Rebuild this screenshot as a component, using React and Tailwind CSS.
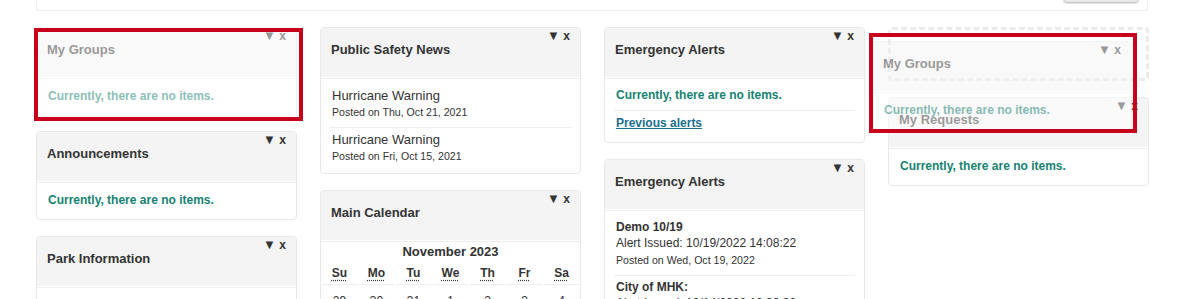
import React from "react";

const TEAL = "text-[#168272]";

function Controls() {
  return (
    <div className="pt-[1px] text-[12px] leading-[14px] font-bold text-[#333] whitespace-nowrap">
      <span className="text-[13px]">▼</span> x
    </div>
  );
}

function Widget({ title, children, className = "", bodyClass = "px-[9px] pt-[5px] pb-[4px]" }) {
  return (
    <div className={`rounded-[4px] border border-[#e9e9e9] bg-white overflow-hidden ${className}`}>
      <div className="flex h-[50px] items-start justify-between border-b border-white bg-[#f4f4f4] pl-[10px] pr-[10px]">
        <div className="pt-[12px] text-[13px] leading-[20px] font-bold text-[#333]">{title}</div>
        <Controls />
      </div>
      <div className={`border-t border-[#eee] ${bodyClass}`}>{children}</div>
    </div>
  );
}

function Item({ children, last }) {
  return (
    <div className={`px-[2px] pt-[3px] pb-[6px] leading-[16px] ${last ? "" : "border-b border-[#eee]"}`}>{children}</div>
  );
}

function Empty() {
  return (
    <Item last>
      <div className={`text-[12px] leading-[18px] font-bold ${TEAL}`}>Currently, there are no items.</div>
    </Item>
  );
}

function EmptyWidget({ title, className }) {
  return (
    <Widget title={title} className={className}>
      <Empty />
    </Widget>
  );
}

function NewsItem({ title, date, last }) {
  return (
    <Item last={last}>
      <div className="pt-[1px] text-[13px] leading-[16px] text-[#333]">{title}</div>
      <div className="text-[10.6px] leading-[17px] text-[#333]">Posted on {date}</div>
    </Item>
  );
}

function AlertItem({ title, issued, date, last }) {
  return (
    <Item last={last}>
      <div className="text-[12px] leading-[16px] font-bold text-[#333]">{title}</div>
      <div className="text-[12px] leading-[16px] text-[#333]">Alert Issued: {issued}</div>
      <div className="mt-[1px] text-[10.6px] leading-[17px] text-[#333]">Posted on {date}</div>
    </Item>
  );
}

const DAYS = ["Su", "Mo", "Tu", "We", "Th", "Fr", "Sa"];
const WEEKS = [
  ["29", "30", "31", "1", "2", "3", "4"],
  ["5", "6", "7", "8", "9", "10", "11"],
];

function Calendar() {
  return (
    <Widget title="Main Calendar" bodyClass="pt-[1px] pb-[4px]">
      <div className="text-center text-[13px] leading-[18px] font-bold text-[#333]">November 2023</div>
      <div className="mt-[4px] grid grid-cols-7">
        {DAYS.map((d) => (
          <div key={d} className="mx-[1px] border-b border-[#eee] pb-[3px] text-center text-[12px] leading-[16px] font-bold text-[#333]">
            <span className="underline decoration-dotted underline-offset-[3px]">{d}</span>
          </div>
        ))}
        {WEEKS.flat().map((d, i) => (
          <div key={i} className="mx-[1px] pt-[8px] pb-[6px] text-center text-[12px] leading-[16px] text-[#333]">
            {d}
          </div>
        ))}
      </div>
    </Widget>
  );
}

export default function App() {
  return (
    <div className="relative h-[299px] overflow-hidden bg-white font-['Liberation_Sans',Arial,sans-serif]">
      <div className="ml-[36px] w-[1113px]">
        {/* top bar */}
        <div className="-mt-[36px] flex w-[1112px] justify-end border border-[#eee] bg-white pt-[8px] pr-[8px] pb-[7px]">
          <div className="h-[30px] w-[76px] rounded-[4px] border border-[#c8c8c8] bg-gradient-to-b from-white to-[#e8e8e8] shadow-[0_1px_1px_rgba(0,0,0,0.12)]" />
        </div>

        <div className="mt-[16px] grid grid-cols-[261px_261px_261px_261px] gap-x-[23px] items-start">
          {/* column 1 */}
          <div className="flex flex-col gap-[15px]">
            <div className="relative">
              <div className="opacity-50">
                <EmptyWidget title="My Groups" />
              </div>
              <div className="absolute top-[1px] -left-[2px] -right-[6px] -bottom-[5px] border-4 border-[#c8001e]" />
            </div>
            <EmptyWidget title="Announcements" />
            <div className="pt-[1px]">
              <Widget title="Park Information" bodyClass="h-[60px]">
                <div />
              </Widget>
            </div>
          </div>

          {/* column 2 */}
          <div className="flex flex-col gap-[16px]">
            <Widget title="Public Safety News" bodyClass="px-[9px] pt-[5px] pb-[2px]">
              <NewsItem title="Hurricane Warning" date="Thu, Oct 21, 2021" />
              <NewsItem title="Hurricane Warning" date="Fri, Oct 15, 2021" last />
            </Widget>
            <Calendar />
          </div>

          {/* column 3 */}
          <div className="flex flex-col gap-[16px]">
            <Widget title="Emergency Alerts">
              <Item>
                <div className={`text-[12px] leading-[17px] font-bold ${TEAL}`}>Currently, there are no items.</div>
              </Item>
              <Item last>
                <a className="block text-[12px] leading-[18px] font-bold text-[#1a6f93] underline">Previous alerts</a>
              </Item>
            </Widget>
            <Widget title="Emergency Alerts">
              <AlertItem title="Demo 10/19" issued="10/19/2022 14:08:22" date="Wed, Oct 19, 2022" />
              <AlertItem title="City of MHK:" issued="10/14/2022 10:30:32" date="Fri, Oct 14, 2022" last />
            </Widget>
          </div>

          {/* column 4 */}
          <div className="flex flex-col gap-[16px]">
            <div className="h-[54px] rounded-[4px] border-[3px] border-dashed border-[#ebebeb]" />
            <EmptyWidget title="My Requests" />
          </div>
        </div>
      </div>

      {/* drag helper */}
      <div className="absolute left-[869px] top-[33px] h-[100px] w-[268px] overflow-hidden border-4 border-[#c8001e]">
        <div className="-ml-[1px] mt-[4px] w-[260px] opacity-50">
          <EmptyWidget title="My Groups" className="bg-white" />
        </div>
      </div>
    </div>
  );
}
